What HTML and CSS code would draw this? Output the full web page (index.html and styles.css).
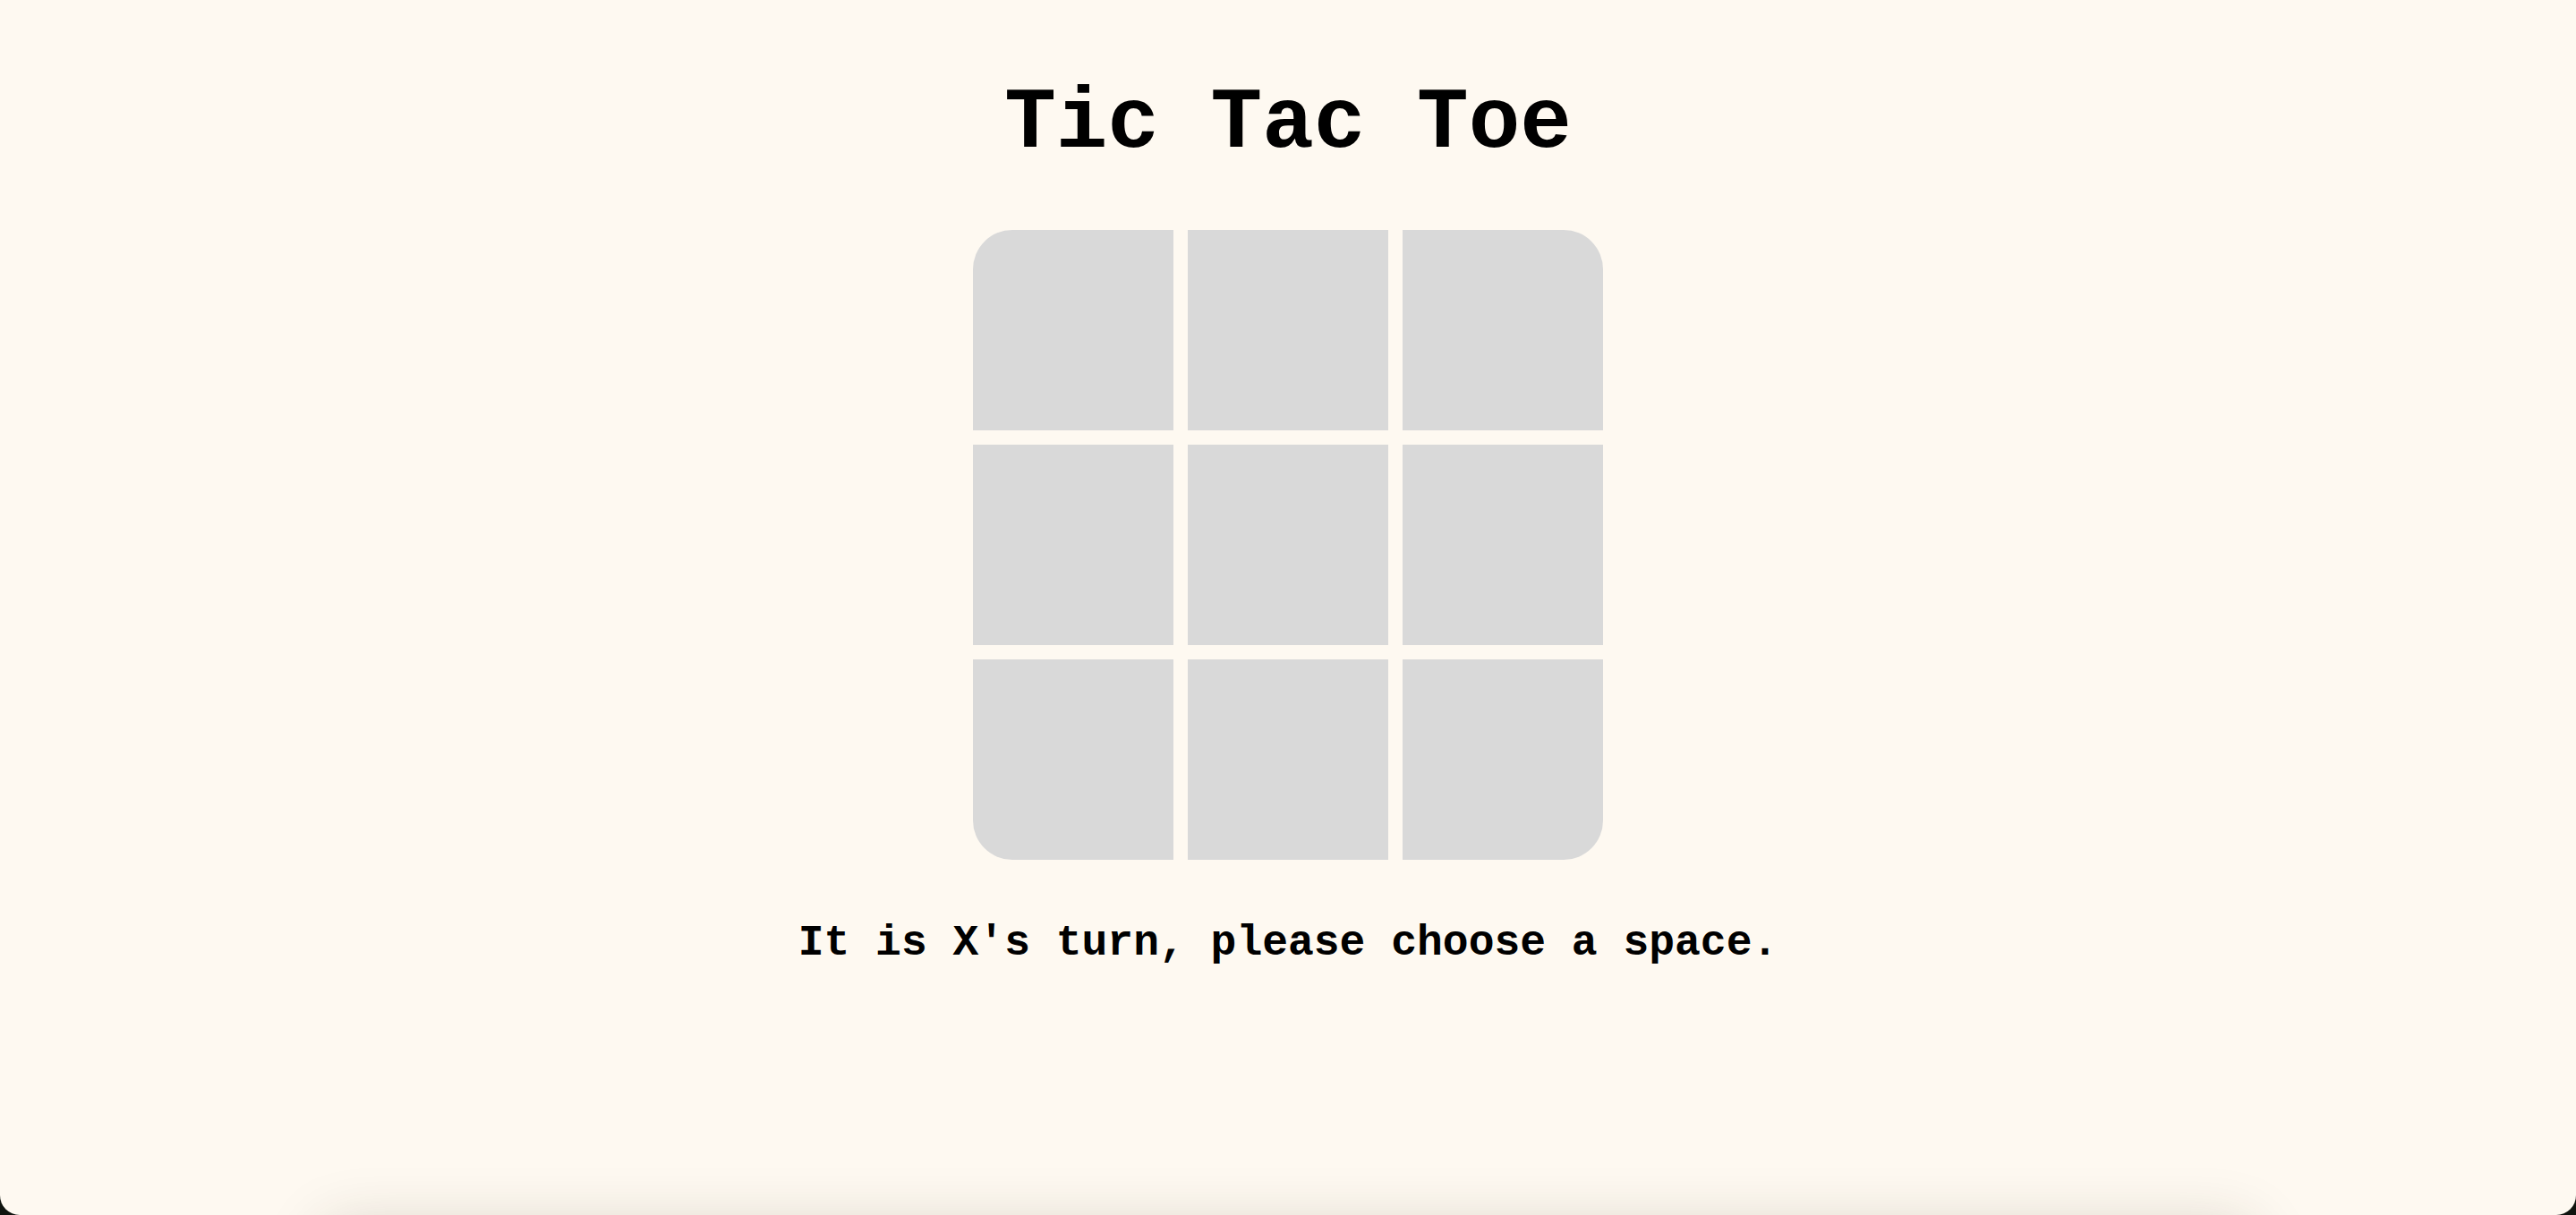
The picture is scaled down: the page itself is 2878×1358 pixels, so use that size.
FILE: index.html
```html
<!DOCTYPE html>
<html lang="en">
<head>
<meta charset="utf-8">
<title>Tic Tac Toe</title>
<link rel="stylesheet" href="styles.css">
</head>
<body>
<main class="page">
  <h1 class="title">Tic Tac Toe</h1>
  <div class="board">
    <div class="cell"></div>
    <div class="cell"></div>
    <div class="cell"></div>
    <div class="cell"></div>
    <div class="cell"></div>
    <div class="cell"></div>
    <div class="cell"></div>
    <div class="cell"></div>
    <div class="cell"></div>
  </div>
  <p class="status">It is X's turn, please choose a space.</p>
  <div class="below"></div>
</main>
</body>
</html>
```

FILE: styles.css
```css
html {
  background: #10140f;
  height: 100%;
}
body {
  margin: 0;
  height: 100%;
  font-family: "Liberation Mono", "Courier New", monospace;
  color: #000;
}
.page {
  box-sizing: border-box;
  height: 100vh;
  overflow: hidden;
  background: #fef9f1;
  border-radius: 0 0 22px 22px;
  display: flex;
  flex-direction: column;
  align-items: center;
  padding-top: 91px;
}
.title {
  margin: 0 0 70px;
  font-size: 96px;
  line-height: 96px;
  font-weight: bold;
}
.board {
  display: grid;
  grid-template-columns: repeat(3, 224px);
  grid-template-rows: repeat(3, 224px);
  gap: 16px;
  border-radius: 44px;
  overflow: hidden;
  flex-shrink: 0;
}
.cell {
  background: #d9d9d9;
}
.status {
  margin: 69px 0 0;
  font-size: 48px;
  line-height: 48px;
  font-weight: bold;
}
.below {
  flex-shrink: 0;
  width: 2150px;
  height: 200px;
  margin-top: 295px;
  background: #fef9f1;
  box-shadow: 0 0 70px rgba(50, 40, 25, 0.2);
}
```
